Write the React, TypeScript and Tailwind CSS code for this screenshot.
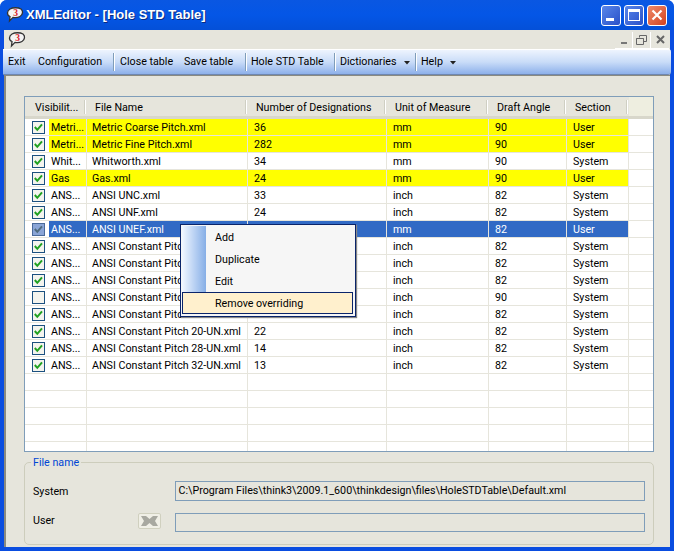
import React from "react";

const rows: [string, string, string, string, string, string, boolean, string][] = [
  ["Metri...", "Metric Coarse Pitch.xml", "36", "mm", "90", "User", true, "y"],
  ["Metri...", "Metric Fine Pitch.xml", "282", "mm", "90", "User", true, "y"],
  ["Whit...", "Whitworth.xml", "34", "mm", "90", "System", true, ""],
  ["Gas", "Gas.xml", "24", "mm", "90", "User", true, "y"],
  ["ANS...", "ANSI UNC.xml", "33", "inch", "82", "System", true, ""],
  ["ANS...", "ANSI UNF.xml", "24", "inch", "82", "System", true, ""],
  ["ANS...", "ANSI UNEF.xml", "", "mm", "82", "User", true, "s"],
  ["ANS...", "ANSI Constant Pitch 4-UN.xml", "", "inch", "82", "System", true, ""],
  ["ANS...", "ANSI Constant Pitch 6-UN.xml", "", "inch", "82", "System", true, ""],
  ["ANS...", "ANSI Constant Pitch 8-UN.xml", "", "inch", "82", "System", true, ""],
  ["ANS...", "ANSI Constant Pitch 12-UN.xml", "", "inch", "90", "System", false, ""],
  ["ANS...", "ANSI Constant Pitch 16-UN.xml", "32", "inch", "82", "System", true, ""],
  ["ANS...", "ANSI Constant Pitch 20-UN.xml", "22", "inch", "82", "System", true, ""],
  ["ANS...", "ANSI Constant Pitch 28-UN.xml", "14", "inch", "82", "System", true, ""],
  ["ANS...", "ANSI Constant Pitch 32-UN.xml", "13", "inch", "82", "System", true, ""],
];

const Logo = () => (
  <svg width="18" height="16" viewBox="0 0 18 16" className="shrink-0">
    <path d="M4 2 C7 0.3 12 0.3 15 2 C17.5 4 16.8 8 14 9.5 C11.5 10.8 9 10.8 7 10.4 L3.5 14 L4 9.5 C0.5 8 0.8 4 4 2 Z" fill="#f4f4f4" stroke="#333" strokeWidth="1.3" />
    <text x="9.5" y="9" textAnchor="middle" fontSize="9.5" fontWeight="700" fill="#d8232a" fontFamily="Liberation Serif, serif">3</text>
  </svg>
);

const Check = ({ on, dim }: { on: boolean; dim: boolean }) => (
  <svg width="13" height="13" viewBox="0 0 13 13" className="shrink-0">
    <rect x="0.5" y="0.5" width="12" height="12" fill={dim ? "#8aa5d6" : "#f4f4ee"} stroke={dim ? "#4a6a9a" : "#1c5180"} />
    {on && <path d="M2.8 6 L5.3 8.8 L10 3.4" fill="none" stroke={dim ? "#4f6b7e" : "#21a121"} strokeWidth="2" />}
  </svg>
);

const Caret = () => (
  <svg width="6" height="4" viewBox="0 0 6 4" className="ml-[7px] mt-[1px]"><path d="M0 0H6L3 3.5Z" fill="#222" /></svg>
);

const Sep = () => <div className="w-[2px] h-[18px] shrink-0 bg-[#7f9db9] border-r border-white" />;

const colW = ["w-[62px]", "w-[161px]", "w-[139px]", "w-[102px]", "w-[78px]", "w-[62px]"];
const cellPad = ["", "pl-[5px]", "pl-[6px]", "pl-[6px]", "pl-[6px]", "pl-[6px]"];

function GridRow({ r }: { r?: (typeof rows)[number] }) {
  const bg = r?.[7] === "y" ? "bg-[#ffff00] text-black" : r?.[7] === "s" ? "bg-[#316ac5] text-white" : "text-black";
  return (
    <div className="flex h-[17px] shrink-0 border-b border-[#e6e5dc]">
      <div className="w-[62px] flex items-center border-r border-[#e6e5dc]">
        <div className="w-[7px]" />
        {r && <Check on={r[6]} dim={r[7] === "s"} />}
        <div className={`ml-[4px] flex-1 h-full pl-[2px] leading-[17px] whitespace-nowrap overflow-hidden ${r ? bg : ""}`}>{r?.[0]}</div>
      </div>
      {[1, 2, 3, 4, 5].map((i) => (
        <div key={i} className={`${colW[i]} ${cellPad[i]} leading-[17px] border-r border-[#e6e5dc] whitespace-nowrap overflow-hidden ${bg}`}>
          {r?.[i] as string}
        </div>
      ))}
    </div>
  );
}

const heads = ["Visibilit...", "File Name", "Number of Designations", "Unit of Measure", "Draft Angle", "Section"];

export default function App() {
  return (
    <div className="w-[674px] h-[551px] overflow-hidden flex flex-col bg-[#0a4de0] rounded-t-[7px] text-[10.7px] text-black" style={{ fontFamily: 'Roboto, Arial, sans-serif' }}>
      {/* title bar */}
      <div className="h-[30px] shrink-0 flex items-center pl-[6px] pr-[7px] bg-gradient-to-b from-[#0a57e2] via-[#0456e6] to-[#0450d8]">
        <Logo />
        <div className="ml-[2px] text-white font-bold text-[13px] whitespace-nowrap [text-shadow:1px_1px_0_#0a2a80]" style={{ fontFamily: '"Liberation Sans", sans-serif' }}>XMLEditor - [Hole STD Table]</div>
        <div className="ml-auto flex gap-[3px]">
          <div className="w-[20px] h-[21px] rounded-[3px] border border-white bg-gradient-to-br from-[#5a86ea] to-[#2a50c8] flex items-end pl-[4px] pb-[4px]">
            <div className="w-[8px] h-[3px] bg-white" />
          </div>
          <div className="w-[20px] h-[21px] rounded-[3px] border border-white bg-gradient-to-br from-[#5a86ea] to-[#2a50c8] flex items-center justify-center">
            <div className="w-[12px] h-[12px] border border-white border-t-[3px]" />
          </div>
          <div className="w-[20px] h-[21px] rounded-[3px] border border-white bg-gradient-to-br from-[#ee8a6a] to-[#d2401c] flex items-center justify-center">
            <svg width="12" height="12" viewBox="0 0 12 12"><path d="M1.5 1.5 L10.5 10.5 M10.5 1.5 L1.5 10.5" stroke="#fff" strokeWidth="2.2" /></svg>
          </div>
        </div>
      </div>

      {/* body */}
      <div className="flex-1 mx-[4px] mb-[4px] bg-[#ece9d8] flex flex-col min-h-0">
        {/* mdi strip */}
        <div className="h-[19px] shrink-0 bg-[#e6e5dc] flex items-center pl-[4px] pr-[1px] pt-[1px]">
          <Logo />
          <div className="ml-auto flex">
            <div className="w-[18px] h-[17px] border-r border-b border-white flex items-end justify-center pb-[4px]"><div className="w-[6px] h-[2px] bg-[#777]" /></div>
            <div className="w-[18px] h-[17px] border-r border-b border-white flex items-center justify-center">
              <svg width="11" height="10" viewBox="0 0 11 10"><path d="M3.5 2.5V0.5H10.5V6.5H8 M0.5 3.5H7.5V9.5H0.5Z M0.5 3.5H7.5" fill="none" stroke="#666" /></svg>
            </div>
            <div className="w-[18px] h-[17px] border-b border-white flex items-center justify-center">
              <svg width="9" height="9" viewBox="0 0 9 9"><path d="M1 1L8 8M8 1L1 8" stroke="#666" strokeWidth="2" /></svg>
            </div>
          </div>
        </div>
        {/* toolbar */}
        <div className="h-[26px] shrink-0 -mx-[1px] rounded-r-[3px] flex items-center pl-[5px] border-t border-white border-b border-b-[#6f87b0] bg-gradient-to-b from-[#eef4fe] via-[#c9dcf8] to-[#8db0ea]">
          <div className="w-[30px] pt-[1px]">Exit</div>
          <div className="w-[75px] pt-[1px]">Configuration</div>
          <Sep />
          <div className="w-[69px] pl-[5px] pt-[1px]">Close table</div>
          <div className="w-[61px] pt-[1px]">Save table</div>
          <Sep />
          <div className="w-[87px] pl-[4px] pt-[1px]">Hole STD Table</div>
          <Sep />
          <div className="w-[79px] pl-[4px] pt-[1px] flex items-center">Dictionaries<Caret /></div>
          <Sep />
          <div className="pl-[4px] pt-[1px] flex items-center">Help<Caret /></div>
        </div>
        {/* content */}
        <div className="flex-1 min-h-0 bg-[#e6e5dc] border-t border-[#8a8a80] border-l-[2px] border-l-[#8a8a80] pl-[18px] pr-[16px] pt-[20px] relative flex flex-col">
          {/* grid */}
          <div className="h-[356px] w-[630px] shrink-0 border border-[#7f9db9] bg-white flex flex-col overflow-hidden">
            <div className="h-[22px] shrink-0 flex bg-[#e6e5dc] border-b-[3px] border-b-[#d8d7cb]">
              {heads.map((h, i) => (
                <div key={h} className={`${colW[i]} flex items-center whitespace-nowrap`}>
                  <div className={`flex-1 pt-[2px] leading-[16px] ${i === 0 ? "pl-[10px]" : "pl-[8px]"}`}>{h}</div>
                  <div className="w-[2px] h-[14px] bg-[#cfcfc3] border-r border-white mr-[1px]" />
                </div>
              ))}
              <div className="flex-1 bg-[#eeeee0]" />
            </div>
            {rows.map((r, i) => <GridRow key={i} r={r} />)}
            {[0, 1, 2, 3, 4].map((i) => <GridRow key={i} />)}
          </div>

          {/* group */}
          <div className="relative mt-[10px] h-[83px] w-[630px] shrink-0 rounded-[5px] border border-[#cdcdbc] px-[8px]">
            <div className="absolute -top-[7px] left-[6px] bg-[#e6e5dc] px-[2px] text-[#0046d5] leading-[14px]">File name</div>
            <div className="flex items-center mt-[18px] h-[20px]">
              <div className="w-[142px] pt-[3px]">System</div>
              <div className="w-[472px] h-[20px] border border-[#7f9db9] pl-[3px] leading-[18px] whitespace-nowrap overflow-hidden">C:\Program Files\think3\2009.1_600\thinkdesign\files\HoleSTDTable\Default.xml</div>
            </div>
            <div className="flex items-center mt-[12px] h-[19px]">
              <div className="w-[105px] -mt-[3px]">User</div>
              <div className="w-[23px] h-[16px] rounded-[2px] border border-[#d0d0bf] bg-[#f0efe6] flex items-center justify-center -mt-[3px]">
                <svg width="17" height="10" viewBox="0 0 17 10"><path d="M0 0H5L8.5 3L12 0H17L14 5L17 10H12L8.5 7L5 10H0L3 5Z" fill="#a8a8a0" /></svg>
              </div>
              <div className="w-[14px]" />
              <div className="w-[472px] h-[19px] border border-[#7f9db9]" />
            </div>
          </div>

          {/* context menu */}
          <div className="absolute left-[174px] top-[148px] w-[176px] h-[93px] border border-[#0a246a] bg-[#f6f6f6] p-[1px] flex flex-col shadow-[1px_1px_1px_#888]">
            <div className="absolute left-[1px] top-[1px] bottom-[2px] w-[24px] bg-gradient-to-r from-[#f2f7ff] to-[#86aee6]" />
            {["Add", "Duplicate", "Edit"].map((t) => (
              <div key={t} className="relative h-[22px] pl-[33px] pt-[1px] leading-[22px]">{t}</div>
            ))}
            <div className="relative h-[22px] pl-[32px] mr-[1px] leading-[21px] bg-[#fff0cd] border border-[#0a246a]">Remove overriding</div>
          </div>
        </div>
      </div>
    </div>
  );
}
